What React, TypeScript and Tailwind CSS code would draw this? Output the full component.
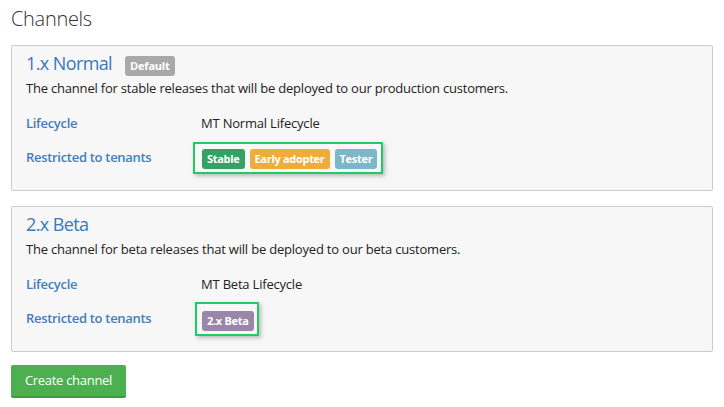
import React from "react";

type Tag = { name: string; color: string };

type Channel = {
	name: string;
	isDefault?: boolean;
	description: string;
	lifecycle: string;
	tags: Tag[];
	box: string;
};

const channels: Channel[] = [
	{
		name: "1.x Normal",
		isDefault: true,
		description: "The channel for stable releases that will be deployed to our production customers.",
		lifecycle: "MT Normal Lifecycle",
		tags: [
			{ name: "Stable", color: "bg-[#35a165]" },
			{ name: "Early adopter", color: "bg-[#eeac3d]" },
			{ name: "Tester", color: "bg-[#7bb7c7]" },
		],
		box: "-ml-[8px] pl-[7px] pr-[4px] pt-[5px] pb-[3px]",
	},
	{
		name: "2.x Beta",
		description: "The channel for beta releases that will be deployed to our beta customers.",
		lifecycle: "MT Beta Lifecycle",
		tags: [{ name: "2.x Beta", color: "bg-[#9986a9]" }],
		box: "-ml-[6px] pl-[5px] pr-[3px] pt-[7px] pb-[3px]",
	},
];

function ChannelCard({ channel }: { channel: Channel }) {
	return (
		<div className="mb-[15px] h-[146px] rounded-[2px] border border-[#cccccc] bg-[#f7f7f7] px-[14px] pt-[10px]">
			<div className="flex h-[20px] items-center">
				<h3 className="mb-[5px] text-[18px] leading-[15px] font-medium tracking-[-0.6px] text-[#3a78b9]">{channel.name}</h3>
				{channel.isDefault && (
					<span className="ml-[13px] flex h-[20px] items-center rounded-[3px] bg-[#a9a9a9] px-[5px] text-[11px] font-bold tracking-[-0.2px] text-white">
						Default
					</span>
				)}
			</div>
			<p className="mt-[3px] text-[13px] leading-[18px] tracking-[-0.2px] text-[#222]">{channel.description}</p>
			<div className="mt-[10px] grid grid-cols-[175px_1fr] text-[13px] tracking-[-0.2px]">
				<div className="flex h-[34px] items-center font-semibold tracking-[-0.3px] text-[#3f7dbd]">Lifecycle</div>
				<div className="flex h-[34px] items-center text-[#222]">{channel.lifecycle}</div>
				<div className="flex h-[34px] items-center font-semibold tracking-[-0.3px] text-[#3f7dbd]">Restricted to tenants</div>
				<div className="flex h-[34px] items-center">
					<div className={`flex gap-[5px] border-2 border-[#1ecc62] shadow-[2px_2px_4px_rgba(0,0,0,0.25)] ${channel.box}`}>
						{channel.tags.map((t) => (
							<span
								key={t.name}
								className={`flex h-[20px] items-center rounded-[3px] px-[5px] text-[11px] font-bold tracking-[-0.3px] text-white ${t.color}`}
							>
								{t.name}
							</span>
						))}
					</div>
				</div>
			</div>
		</div>
	);
}

export default function App() {
	return (
		<div className="min-h-[407px] bg-white px-[11px] pt-[7px] font-['Open_Sans','Noto_Sans',sans-serif]">
			<h2 className="mb-[14px] text-[20px] leading-[24px] font-light tracking-[-0.3px] text-[#333]">Channels</h2>
			{channels.map((c) => (
				<ChannelCard key={c.name} channel={c} />
			))}
			<button className="-mt-[2px] h-[33px] w-[115px] rounded-[2px] border-b-2 border-[#3e9a40] bg-[#4cb050] text-[13px] tracking-[-0.3px] text-white">
				Create channel
			</button>
		</div>
	);
}
